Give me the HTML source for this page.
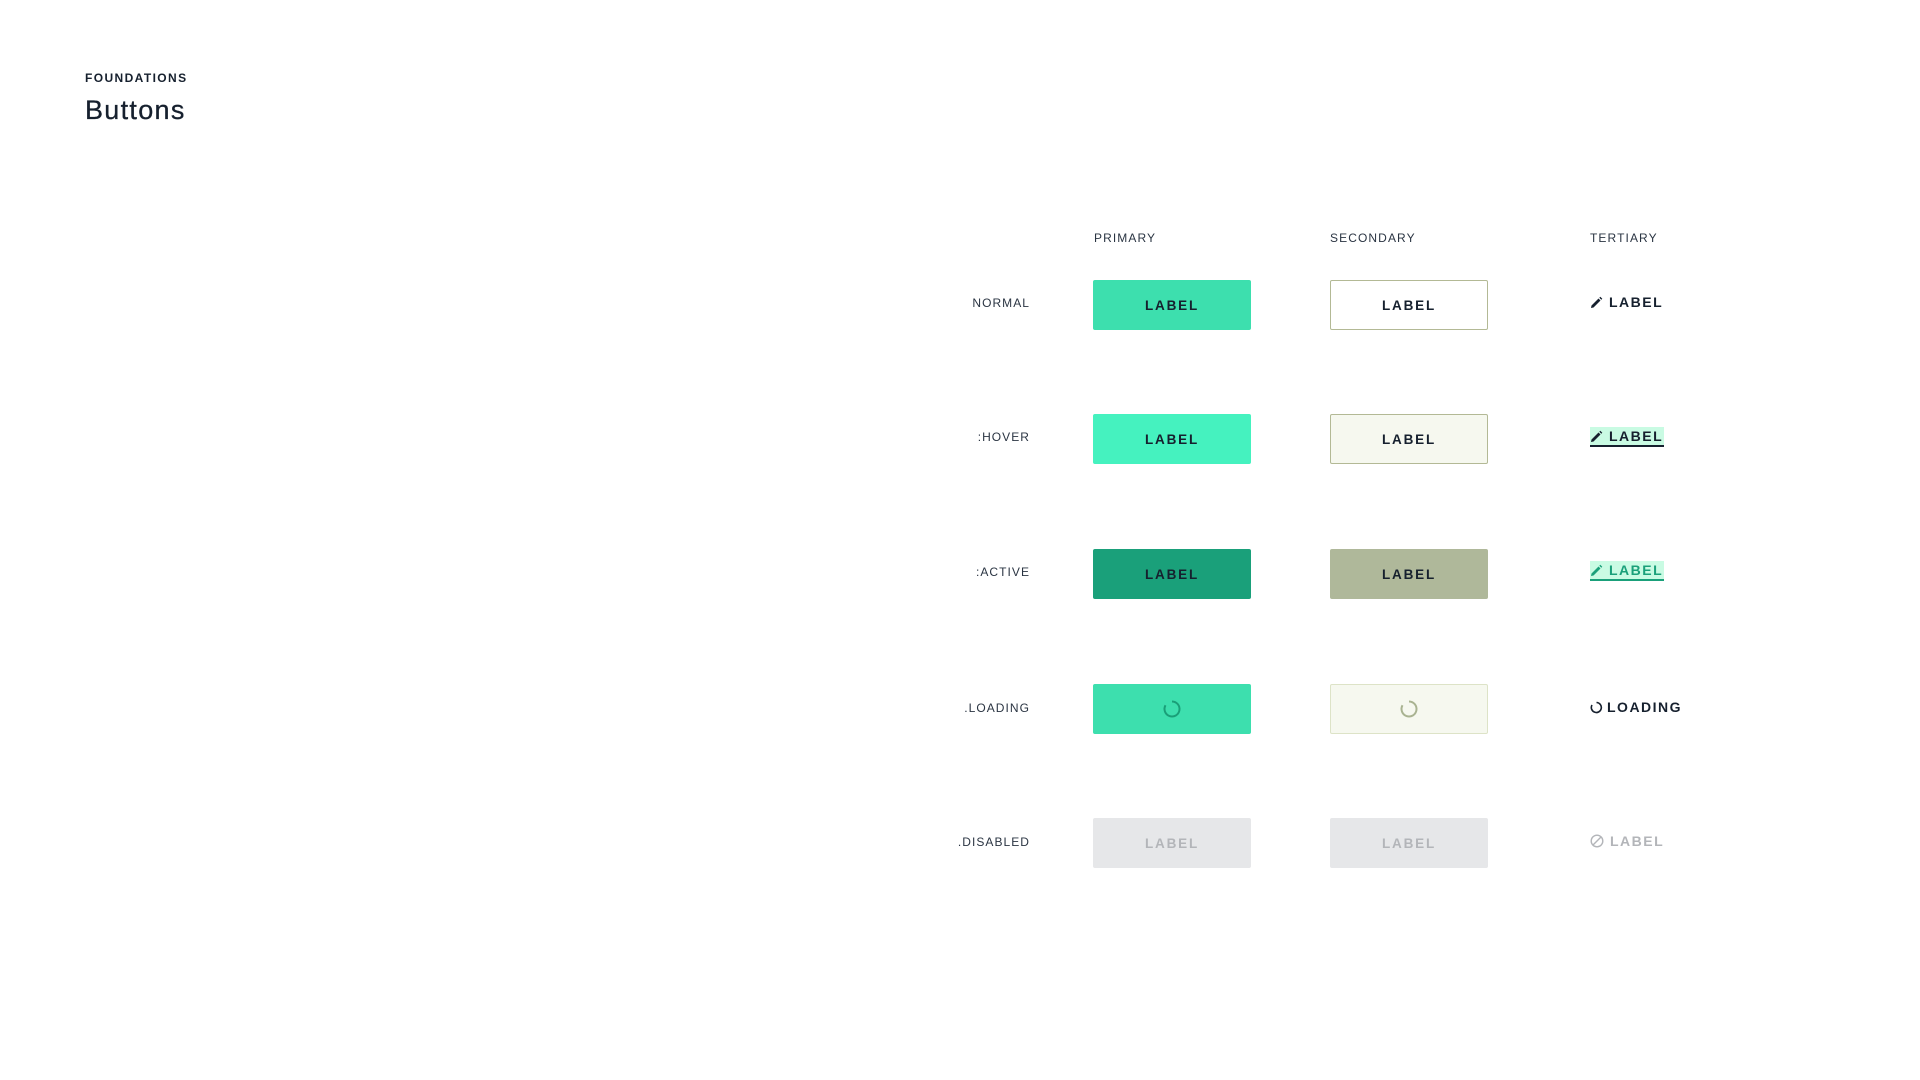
<!DOCTYPE html>
<html><head><meta charset="utf-8"><style>
*{margin:0;padding:0;box-sizing:border-box}
html,body{width:1920px;height:1080px;background:#fff;overflow:hidden}
body{position:relative;font-family:"Liberation Sans",Arial,sans-serif;color:#16202e}
.abs{position:absolute}
.eyebrow{left:85px;top:71px;font-size:12px;font-weight:bold;letter-spacing:1.4px;line-height:14px}
.title{left:85px;top:95px;font-size:27px;line-height:30px;font-weight:500;letter-spacing:1.3px;color:#16202e;-webkit-text-stroke:0.3px #16202e}
.colh{top:231px;font-size:12px;letter-spacing:1.1px;line-height:14px;color:#2a3442}
.rowl{right:890px;font-size:12px;letter-spacing:1.05px;line-height:14px;color:#2a3442;text-align:right;width:200px}
.btn{width:158px;height:50px;border-radius:2px;display:flex;align-items:center;justify-content:center;font-weight:bold;font-size:13.5px;letter-spacing:1.8px;color:#16202e}
.p{left:1093px}.s{left:1330px}
.ter{left:1590px;height:18px;display:flex;align-items:center;font-weight:bold;font-size:14px;letter-spacing:1.5px;line-height:18px;padding-right:1px}
.ter svg{margin-right:6px}
</style></head><body>
<div class="abs eyebrow">FOUNDATIONS</div>
<div class="abs title">Buttons</div>

<div class="abs colh" style="left:1094px">PRIMARY</div>
<div class="abs colh" style="left:1330px">SECONDARY</div>
<div class="abs colh" style="left:1590px">TERTIARY</div>

<div class="abs rowl" style="top:296px">NORMAL</div>
<div class="abs rowl" style="top:430px">:HOVER</div>
<div class="abs rowl" style="top:565px">:ACTIVE</div>
<div class="abs rowl" style="top:701px">.LOADING</div>
<div class="abs rowl" style="top:835px">.DISABLED</div>

<!-- normal -->
<div class="abs btn p" style="top:280px;background:#3ddfae">LABEL</div>
<div class="abs btn s" style="top:280px;background:#fff;border:1.5px solid #b3b995">LABEL</div>
<div class="abs ter" style="top:293px">
<svg width="13" height="13" viewBox="0 0 13 13"><path d="M1 12 L1.5 9.5 L8.5 2.5 L10.5 4.5 L3.5 11.5 Z M9.3 1.7 L10.3 0.7 L12.3 2.7 L11.3 3.7 Z" fill="#16202e"/></svg>LABEL</div>

<!-- hover -->
<div class="abs btn p" style="top:414px;background:#45f2bf">LABEL</div>
<div class="abs btn s" style="top:414px;background:#f6f8ef;border:1.5px solid #b3b995">LABEL</div>
<div class="abs ter" style="top:427px;background:#c9fbe3;border-bottom:2px solid #16202e;height:20px">
<svg width="13" height="13" viewBox="0 0 13 13"><path d="M1 12 L1.5 9.5 L8.5 2.5 L10.5 4.5 L3.5 11.5 Z M9.3 1.7 L10.3 0.7 L12.3 2.7 L11.3 3.7 Z" fill="#16202e"/></svg>LABEL</div>

<!-- active -->
<div class="abs btn p" style="top:549px;background:#1aa07a">LABEL</div>
<div class="abs btn s" style="top:549px;background:#afb89a">LABEL</div>
<div class="abs ter" style="top:561px;background:#c9fbe3;border-bottom:2px solid #1aa07a;height:20px;color:#1aa07a">
<svg width="13" height="13" viewBox="0 0 13 13"><path d="M1 12 L1.5 9.5 L8.5 2.5 L10.5 4.5 L3.5 11.5 Z M9.3 1.7 L10.3 0.7 L12.3 2.7 L11.3 3.7 Z" fill="#1aa07a"/></svg>LABEL</div>

<!-- loading -->
<div class="abs btn p" style="top:684px;background:#3ddfae">
<svg width="20" height="20" viewBox="0 0 20 20"><path d="M10 2.5 A7.5 7.5 0 1 1 3.5 6.3" fill="none" stroke="#1a9f78" stroke-width="2"/></svg></div>
<div class="abs btn s" style="top:684px;background:#f6f8ef;border:1.5px solid #dde3c7">
<svg width="20" height="20" viewBox="0 0 20 20"><path d="M10 2.5 A7.5 7.5 0 1 1 3.5 6.3" fill="none" stroke="#a9b391" stroke-width="2"/></svg></div>
<div class="abs ter" style="top:698px">
<svg width="13" height="13" viewBox="0 0 13 13" style="margin-right:4px"><path d="M6.5 1.5 A5 5 0 1 1 2 4" fill="none" stroke="#16202e" stroke-width="1.6"/></svg>LOADING</div>

<!-- disabled -->
<div class="abs btn p" style="top:818px;background:#e6e7e9;color:#b3b5b9">LABEL</div>
<div class="abs btn s" style="top:818px;background:#e6e7e9;color:#b3b5b9">LABEL</div>
<div class="abs ter" style="top:832px;color:#b3b5b9">
<svg width="14" height="14" viewBox="0 0 14 14"><circle cx="7" cy="7" r="5.8" fill="none" stroke="#b3b5b9" stroke-width="1.4"/><path d="M3 11 L11 3" stroke="#b3b5b9" stroke-width="1.4"/></svg>LABEL</div>
</body></html>
